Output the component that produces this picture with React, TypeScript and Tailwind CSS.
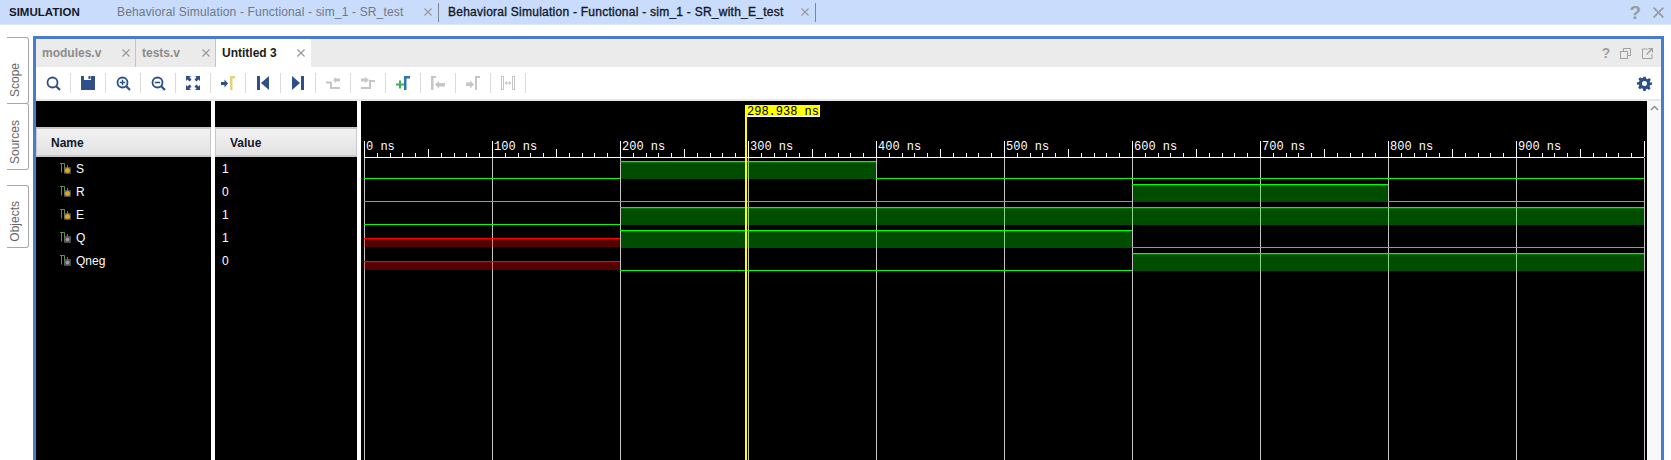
import React from 'react';

// --- Waveform data ---

type Level = 'low' | 'high' | 'x';

interface ISignal {
  name: string;
  value: string;
  kind: 'input' | 'output';
  segments: [number, number, Level][];
}

const signals: ISignal[] = [
  { name: 'S', value: '1', kind: 'input', segments: [[0, 200, 'low'], [200, 400, 'high'], [400, 1000, 'low']] },
  { name: 'R', value: '0', kind: 'input', segments: [[0, 600, 'low'], [600, 800, 'high'], [800, 1000, 'low']] },
  { name: 'E', value: '1', kind: 'input', segments: [[0, 200, 'low'], [200, 1000, 'high']] },
  { name: 'Q', value: '1', kind: 'output', segments: [[0, 200, 'x'], [200, 600, 'high'], [600, 1000, 'low']] },
  { name: 'Qneg', value: '0', kind: 'output', segments: [[0, 200, 'x'], [200, 600, 'low'], [600, 1000, 'high']] },
];

const X0 = 364;
const PX_PER_NS = 1.28;
const ROW_TOP = 161;
const ROW_PITCH = 23;
const toX = (ns: number) => X0 + ns * PX_PER_NS;

const NAVY = '#2f4f8a';
const OFF = '#c6c6c6';

// --- Small icons ---

const CloseIcon = ({ size = 8 }: { size?: number }) => (
  <svg width={size} height={size} viewBox="0 0 9 9" className="shrink-0">
    <path d="M0.5 0.5 8.5 8.5M8.5 0.5 0.5 8.5" stroke="#9c9c9c" strokeWidth="1.5" fill="none" />
  </svg>
);

const Glass = ({ inner }: { inner?: React.ReactNode }) => (
  <svg width="15" height="15" viewBox="0 0 15 15">
    <circle cx="6.5" cy="6.5" r="5" fill="none" stroke={NAVY} strokeWidth="1.8" />
    <path d="M10.2 10.2 14 14" stroke={NAVY} strokeWidth="2.2" />
    {inner}
  </svg>
);

const toolbarIcons: React.ReactNode[] = [
  <Glass />,
  <svg width="14" height="14" viewBox="0 0 14 14">
    <path d="M0 0H3V4H10V0H14V14H0Z" fill={NAVY} />
    <rect x="7.5" y="0" width="2" height="3" fill={NAVY} />
  </svg>,
  <Glass inner={<path d="M3.8 6.5H9.2M6.5 3.8V9.2" stroke={NAVY} strokeWidth="1.4" />} />,
  <Glass inner={<path d="M3.8 6.5H9.2" stroke={NAVY} strokeWidth="1.6" />} />,
  <svg width="14" height="14" viewBox="0 0 14 14" fill={NAVY}>
    <path d="M0 0H5L3.500 1.500 5.500 3.500 3.500 5.500 1.500 3.500 0 5Z" />
    <path d="M14 0H9L10.500 1.500 8.500 3.500 10.500 5.500 12.500 3.500 14 5Z" />
    <path d="M0 14H5L3.500 12.500 5.500 10.500 3.500 8.500 1.500 10.500 0 9Z" />
    <path d="M14 14H9L10.500 12.500 8.500 10.500 10.500 8.500 12.500 10.500 14 9Z" />
  </svg>,
  <svg width="14" height="14" viewBox="0 0 14 14">
    <path d="M0 6H3.500V3.500L7 7.500 3.500 11.500V9H0Z" fill={NAVY} />
    <path d="M9 14V0H14V2.500H11.500V14Z" fill="#e6d27c" />
  </svg>,
  <svg width="12" height="14" viewBox="0 0 12 14" fill={NAVY}>
    <rect x="0" y="0" width="3" height="14" />
    <path d="M12 0V14L4 7Z" />
  </svg>,
  <svg width="12" height="14" viewBox="0 0 12 14" fill={NAVY}>
    <rect x="9" y="0" width="3" height="14" />
    <path d="M0 0V14L8 7Z" />
  </svg>,
  <svg width="14" height="14" viewBox="0 0 14 14" fill={OFF}>
    <path d="M0 5.500H6V11H14V13H4V7.500H0Z" />
    <path d="M7 4 10 1V2.500H14V5.500H10V7Z" />
  </svg>,
  <svg width="14" height="14" viewBox="0 0 14 14" fill={OFF}>
    <path d="M0 11H8V4H14V6H10V13H0Z" />
    <path d="M0 2.500H4V1L8 4 4 7V5.500H0Z" />
  </svg>,
  <svg width="14" height="14" viewBox="0 0 14 14">
    <path d="M0 7.500H3V4.500H5V7.500H8V9.500H5V12.500H3V9.500H0Z" fill="#3cb44b" />
    <path d="M8 14V0H14V2.500H10.500V14Z" fill="#2f74b0" />
  </svg>,
  <svg width="14" height="14" viewBox="0 0 14 14" fill={OFF}>
    <path d="M0 14V0H5V2H2.500V14Z" />
    <path d="M4 8.500 8 5V7H14V10.500H8V12.500Z" />
  </svg>,
  <svg width="14" height="14" viewBox="0 0 14 14" fill={OFF}>
    <path d="M0 6.500H4V4.500L8 8.500 4 12.500V10H0Z" />
    <path d="M9 14V0H14V2H11V14Z" />
  </svg>,
  <svg width="14" height="14" viewBox="0 0 14 14" fill={OFF}>
    <path d="M0 0H3V14H0ZM1 1V13H2V1Z" fillRule="evenodd" />
    <path d="M11 0H14V14H11ZM12 1V13H13V1Z" fillRule="evenodd" />
    <path d="M3.500 7 6 5V6.500H8V5L10.500 7 8 9V7.500H6V9Z" />
  </svg>,
];

const SignalIcon = ({ kind }: { kind: ISignal['kind'] }) => (
  <svg width="11" height="11" viewBox="0 0 11 11" className="shrink-0">
    <path d="M0 0.500H4.500M1.500 0.500V9.500M4.500 0.500V9.500M7.500 2V6" stroke="#5f9058" strokeWidth="1" fill="none" />
    <rect x="4" y="4" width="7" height="7" rx="1" fill="#6a6a6a" fillOpacity="0.75" />
    {kind === 'input' ? (
      <circle cx="7.500" cy="7.500" r="2.500" fill="#e0a818" />
    ) : (
      <circle cx="7.500" cy="7.500" r="2.500" fill="#9a9a9a" stroke="#3c3c3c" strokeWidth="0.8" />
    )}
  </svg>
);

const SideTab = ({ label, className }: { label: string; className: string }) => (
  <div className={`w-[22px] flex border-y border-r border-[#a8a8a8] rounded-r-[3px] ${className}`}>
    <span className="[writing-mode:vertical-rl] rotate-180 text-[12px] leading-[17px] text-[#666]">{label}</span>
  </div>
);

const EditorTab = ({ label, width, active }: { label: string; width: string; active?: boolean }) => (
  <div className={`h-full flex items-center justify-between pl-[6px] ${width} ${active ? 'bg-white text-[#1c1c1c] pr-[6px]' : 'text-[#8c8c8c] border-r border-[#c4c4c4] pr-[5px]'}`}>
    <span className="text-[12px] font-bold">{label}</span>
    <CloseIcon />
  </div>
);

// --- Waveform canvas, drawn in page coordinates ---

const WavePane = () => {
  const minor = Array.from({ length: 101 }, (_, i) => i).filter(i => i % 10 !== 0);
  return (
    <svg className="block w-full h-full" viewBox="361 101 1286 359" shapeRendering="crispEdges" preserveAspectRatio="xMinYMin slice">
      {/* ruler */}
      <rect x={X0} y={157} width={1280} height={1} fill="#fff" />
      {minor.map(i => (
        <rect key={i} x={Math.round(X0 + i * 12.8)} y={i % 5 === 0 ? 149 : 153} width={1} height={i % 5 === 0 ? 8 : 4} fill="#fff" />
      ))}
      {Array.from({ length: 11 }, (_, i) => (
        <g key={i}>
          <rect x={toX(i * 100)} y={141} width={1} height={16} fill="#fff" />
          <rect x={toX(i * 100)} y={158} width={1} height={302} fill="#c4c4c4" />
          {i < 10 && (
            <text x={toX(i * 100) + 2} y={150} fill="#fff" fontSize="12" fontFamily="'Liberation Mono', monospace" shapeRendering="auto">
              {i * 100} ns
            </text>
          )}
        </g>
      ))}

      {/* signals */}
      {signals.map((sig, r) => {
        const top = ROW_TOP + r * ROW_PITCH;
        const low = top + 17;
        return sig.segments.map(([from, to, level]) => {
          const x = toX(from);
          const w = (to - from) * PX_PER_NS;
          if (level === 'low') {
            return <rect key={from} x={x} y={low} width={w} height={1} fill="#00ff00" />;
          }
          if (level === 'high') {
            return (
              <g key={from}>
                <rect x={x + 1} y={top} width={w - 1} height={18} fill="#00ff00" fillOpacity="0.3" />
                <rect x={x + 1} y={top + 1} width={w - 1} height={1} fill="#00ff00" fillOpacity="0.25" />
                <rect x={x} y={top} width={w} height={1} fill="#00ff00" />
              </g>
            );
          }
          return (
            <g key={from}>
              <rect x={x} y={top + 8} width={w} height={9} fill="#ff0000" fillOpacity="0.33" />
              <rect x={x} y={top + 9} width={w} height={1} fill="#ff0000" fillOpacity="0.2" />
              <rect x={x} y={top + 8} width={w} height={1} fill="#ff0000" />
            </g>
          );
        });
      })}

      {/* cursor */}
      <rect x={745} y={105} width={75} height={12} fill="#fff" />
      <rect x={745} y={105} width={74} height={11} fill="#ffff00" />
      <rect x={745} y={105} width={2} height={355} fill="#ffff00" />
      <text x={747} y={115} fill="#000" fontSize="12" fontFamily="'Liberation Mono', monospace" shapeRendering="auto">
        298.938 ns
      </text>
    </svg>
  );
};

const HeaderCell = ({ label, className }: { label: string; className: string }) => (
  <div className={`h-[30px] flex items-center pt-px border-y-2 border-x border-[#c8c8c8] bg-gradient-to-b from-[#f2f2f2] to-[#e2e2e2] text-[12px] font-bold text-[#10182a] ${className}`}>
    {label}
  </div>
);

export default function App() {
  return (
    <div className="w-[1671px] h-[460px] overflow-hidden bg-white font-['Liberation_Sans',Arial,sans-serif]">
      {/* Top bar */}
      <div className="h-[25px] flex items-center bg-[#c9dcfc] border-b border-[#dbe7fb] text-[12px]">
        <span className="w-[117px] pl-[9px] pt-[2px] text-[11.5px] font-bold text-[#10182a]">SIMULATION</span>
        <div className="w-[322px] h-[19px] flex items-center justify-between pr-[6px] border-r border-[#7d8794] text-[#6d7885]">
          <span className="tracking-[0.16px]">Behavioral Simulation - Functional - sim_1 - SR_test</span>
          <CloseIcon />
        </div>
        <div className="w-[377px] h-[19px] flex items-center justify-between pl-[9px] pr-[6px] border-r border-[#7d8794] text-[#10182a]">
          <span className="tracking-[0.25px] [-webkit-text-stroke:0.35px_#10182a]">Behavioral Simulation - Functional - sim_1 - SR_with_E_test</span>
          <CloseIcon />
        </div>
        <div className="ml-auto flex items-center gap-[12px] pr-[7px]">
          <span className="text-[19px] leading-none font-bold text-[#9a9a9a]">?</span>
          <CloseIcon size={11} />
        </div>
      </div>

      <div className="flex h-[435px]">
        {/* Side tabs */}
        <div className="w-[33px] pl-[7px] pt-[12px] flex flex-col shrink-0">
          <SideTab label="Scope" className="h-[67px] items-start pt-[25px]" />
          <SideTab label="Sources" className="h-[67px] items-start pt-[16px] -mt-px" />
          <SideTab label="Objects" className="h-[63px] mt-[15px] items-start pt-[15px]" />
        </div>

        {/* Main panel */}
        <div className="mt-[11px] w-[1631px] border-x-[3px] border-t-[3px] border-[#4a7ccd] flex flex-col min-h-0">
          {/* Editor tabs */}
          <div className="h-[28px] flex items-center bg-[#ebebeb] shrink-0">
            <EditorTab label="modules.v" width="w-[100px]" />
            <EditorTab label="tests.v" width="w-[80px]" />
            <EditorTab label="Untitled 3" width="w-[95px]" active />
            <div className="ml-auto flex items-center gap-[10px] pr-[8px] text-[#a0a0a0]">
              <span className="text-[14px] leading-none font-bold w-[10px] text-center mr-[-2px]">?</span>
              <svg width="11" height="11" viewBox="0 0 11 11" fill="none" stroke="#a0a0a0" className="ml-[1px]">
                <path d="M3.500 3V0.500H10.500V7.500H7.500" />
                <rect x="0.5" y="3.5" width="7" height="7" />
              </svg>
              <svg width="11" height="11" viewBox="0 0 11 11" fill="none" stroke="#a0a0a0" className="ml-[1px]">
                <path d="M5.500 1H0.500V10.500H10V6" />
                <path d="M4.500 6.500 10 1M6.500 0.500H10.500V4.500" strokeWidth="1.4" />
              </svg>
            </div>
          </div>

          {/* Toolbar */}
          <div className="h-[32px] flex items-center bg-white shrink-0">
            {toolbarIcons.map((icon, i) => (
              <React.Fragment key={i}>
                <div className="w-[34px] flex items-center justify-center">{icon}</div>
                <span className="w-px h-[20px] bg-[#dadada]" />
              </React.Fragment>
            ))}
            <svg width="15" height="15" viewBox="0 0 24 24" className="ml-auto mr-[9px]" fill={NAVY}>
              <path d="M10 1h4l.6 3.100 2.200.9 2.600-1.800 2.800 2.800-1.800 2.600.9 2.200L24 10v4l-3.100.6-.9 2.200 1.800 2.600-2.800 2.800-2.600-1.800-2.200.9L14 24h-4l-.6-3.700-2.200-.9-2.600 1.800-2.800-2.800 1.800-2.600-.9-2.200L0 14v-4l3.100-.6.9-2.200-1.800-2.600 2.800-2.800 2.600 1.800 2.200-.9ZM12 8a4 4 0 1 0 0 8 4 4 0 0 0 0-8Z" fillRule="evenodd" />
            </svg>
          </div>

          {/* Wave window */}
          <div className="h-[2px] bg-[#e8e8e8] shrink-0" />
          <div className="flex flex-1 min-h-0">
            <div className="w-[175px] bg-black flex flex-col shrink-0">
              <div className="h-[26px]" />
              <HeaderCell label="Name" className="pl-[14px]" />
              {signals.map(sig => (
                <div key={sig.name} className="h-[23px] flex items-center pl-[24px] gap-[5px] text-[12px] text-white">
                  <SignalIcon kind={sig.kind} />
                  <span>{sig.name}</span>
                </div>
              ))}
            </div>
            <div className="w-[142px] ml-[4px] bg-black flex flex-col shrink-0">
              <div className="h-[26px]" />
              <HeaderCell label="Value" className="pl-[14px]" />
              {signals.map(sig => (
                <div key={sig.name} className="h-[23px] flex items-center pl-[7px] text-[12px] text-white">
                  {sig.value}
                </div>
              ))}
            </div>
            <div className="w-[1286px] ml-[4px] bg-black shrink-0">
              <WavePane />
            </div>
            <div className="flex-1 bg-[#f8f8f8] flex justify-center pt-[4px]">
              <svg width="9" height="6" viewBox="0 0 9 6" fill="none" stroke="#8a8a8a" strokeWidth="1.4">
                <path d="M1 5 4.500 1.500 8 5" />
              </svg>
            </div>
          </div>
        </div>
      </div>
    </div>
  );
}
